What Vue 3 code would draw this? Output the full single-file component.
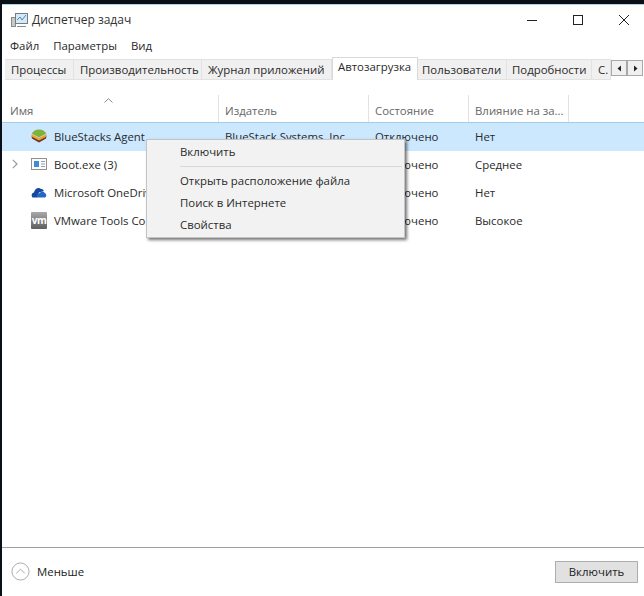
<script setup>
const tabs = [
  { label: 'Процессы', w: 69, pad: 6 },
  { label: 'Производительность', w: 128, pad: 6 },
  { label: 'Журнал приложений', w: 130, pad: 6 },
  { label: 'Автозагрузка', w: 86, pad: 5, active: true },
  { label: 'Пользователи', w: 89, pad: 4 },
  { label: 'Подробности', w: 85, pad: 5 },
  { label: 'С.', w: 19, pad: 6 }
]
const rows = [
  { name: 'BlueStacks Agent', icon: 'bs', pub: 'BlueStack Systems, Inc.', state: 'Отключено', impact: 'Нет', selected: true },
  { name: 'Boot.exe (3)', icon: 'boot', pub: '', state: 'Отключено', impact: 'Среднее', expand: true },
  { name: 'Microsoft OneDrive', icon: 'od', pub: '', state: 'Отключено', impact: 'Нет' },
  { name: 'VMware Tools Core Service', icon: 'vm', pub: '', state: 'Отключено', impact: 'Высокое' }
]
</script>

<template>
  <div class="screen">
    <div class="win">
      <div class="titlebar">
        <svg class="appicon" width="18" height="16" viewBox="0 0 18 16">
          <rect x="0.5" y="5.5" width="4" height="9" fill="#c9c9c9" stroke="#8a8a8a" />
          <rect x="4.5" y="1.5" width="12" height="10" fill="#d8e8f2" stroke="#6f7f8a" />
          <path d="M6 8 L9 5 L11 8 L15 3" fill="none" stroke="#3f8fc0" stroke-width="1" />
          <path d="M6 14.5 H15" stroke="#8a8a8a" />
        </svg>
        <span class="title">Диспетчер задач</span>
        <div class="winbtns">
          <svg width="12" height="12" viewBox="0 0 12 12"><path d="M1 6.5 H11" stroke="#222" /></svg>
          <svg width="12" height="12" viewBox="0 0 12 12"><rect x="1.5" y="1.5" width="9" height="9" fill="none" stroke="#222" /></svg>
          <svg width="12" height="12" viewBox="0 0 12 12"><path d="M1 1 L11 11 M11 1 L1 11" stroke="#222" /></svg>
        </div>
      </div>

      <div class="menubar">
        <span>Файл</span><span>Параметры</span><span>Вид</span>
      </div>

      <div class="tabstrip">
        <div
          v-for="t in tabs"
          :key="t.label"
          class="tab"
          :class="{ active: t.active }"
          :style="{ width: t.w + 'px', paddingLeft: t.pad + 'px' }"
        >{{ t.label }}</div>
        <div class="scroller">
          <div class="sbtn"><svg width="5" height="7" viewBox="0 0 5 7"><path d="M4 0.5 V6.5 L0.5 3.5 Z" fill="#222" /></svg></div>
          <div class="sbtn"><svg width="5" height="7" viewBox="0 0 5 7"><path d="M1 0.5 V6.5 L4.5 3.5 Z" fill="#222" /></svg></div>
        </div>
      </div>

      <div class="content">
        <div class="thead">
          <div class="th c1">
            <svg class="sort" width="9" height="5" viewBox="0 0 9 5"><path d="M0.5 4.5 L4.5 0.7 L8.5 4.5" fill="none" stroke="#8a8a8a" /></svg>
            Имя
          </div>
          <div class="th c2">Издатель</div>
          <div class="th c3">Состояние</div>
          <div class="th c4">Влияние на за...</div>
        </div>

        <div v-for="r in rows" :key="r.name" class="row" :class="{ selected: r.selected }">
          <div class="c1 namecell">
            <span class="exp">
              <svg v-if="r.expand" width="6" height="10" viewBox="0 0 6 10"><path d="M0.8 0.8 L5 5 L0.8 9.2" fill="none" stroke="#9a9a9a" stroke-width="1.2" /></svg>
            </span>
            <svg v-if="r.icon === 'bs'" class="ic" width="16" height="16" viewBox="0 0 16 16">
              <path d="M0.5 8 L8 12 L15.5 8 L15 10.5 L8 14.5 L1 10.5 Z" fill="#7a2c26" />
              <path d="M0.5 6 L8 10 L15.5 6 L15.5 8.5 L8 12.5 L0.5 8.5 Z" fill="#e3a52e" />
              <path d="M0.8 5.5 C2 3.5 4 1.5 8 1.5 C12 1.5 14 3.5 15.2 5.5 L8 9.5 Z" fill="#7fb23a" />
            </svg>
            <svg v-else-if="r.icon === 'boot'" class="ic" width="16" height="16" viewBox="0 0 16 16">
              <rect x="0.5" y="2.5" width="15" height="11" fill="#fbfbfb" stroke="#9a8f88" />
              <rect x="3" y="5" width="5" height="6" fill="#3f8ad6" />
              <path d="M10 5.5 H14 M10 8 H14 M10 10.5 H14" stroke="#8fa3b5" />
            </svg>
            <svg v-else-if="r.icon === 'od'" class="ic" width="16" height="16" viewBox="0 0 16 16">
              <path d="M1.5 13.5 C0 12 0.5 9 3 8.6 C3.5 5 7.5 2.5 10 5 C11 4.6 12.5 5.4 12.8 7 L8 8.5 L6 13.5 Z" fill="#15489f" />
              <path d="M6 13.5 C5.6 11 7 9.2 9 9 C10 7 13 7 13.6 9 C15.4 9.2 16 12.5 14 13.5 Z" fill="#2566c4" />
            </svg>
            <span v-else class="ic vm">vm</span>
            <span class="nm">{{ r.name }}</span>
          </div>
          <div class="c2 cell">{{ r.pub }}</div>
          <div class="c3 cell">{{ r.state }}</div>
          <div class="c4 cell">{{ r.impact }}</div>
        </div>

        <div class="ctx">
          <div class="mi">Включить</div>
          <div class="sep"></div>
          <div class="mi">Открыть расположение файла</div>
          <div class="mi">Поиск в Интернете</div>
          <div class="mi">Свойства</div>
        </div>
      </div>

      <div class="footer">
        <div class="less">
          <svg width="19" height="19" viewBox="0 0 20 20">
            <circle cx="10" cy="10" r="9" fill="#fff" stroke="#a8a8a8" />
            <path d="M5.5 12 L10 7.5 L14.5 12" fill="none" stroke="#a8a8a8" />
          </svg>
          <span>Меньше</span>
        </div>
        <div class="btn">Включить</div>
      </div>
    </div>
  </div>
</template>

<style>
html, body { margin: 0; padding: 0; background: #fff; }
</style>

<style scoped>
.screen {
  width: 644px;
  height: 596px;
  overflow: hidden;
  background: #0a1018;
  padding: 4px 0 0 2px;
  box-sizing: border-box;
  font-family: "Open Sans", "Noto Sans", sans-serif;
  font-size: 11.4px;
  color: #2a2a2a;
}
.win {
  width: 642px;
  height: 592px;
  background: #fff;
  display: flex;
  flex-direction: column;
  border-top: 1px solid #a9d3ee;
  box-sizing: border-box;
}
.titlebar {
  height: 29px;
  display: flex;
  align-items: center;
  padding-left: 9px;
  flex: none;
}
.appicon { margin-right: 3px; }
.title { font-size: 12px; color: #333; }
.winbtns {
  margin-left: auto;
  display: flex;
  gap: 34px;
  padding-right: 14px;
}
.menubar {
  height: 23px;
  display: flex;
  align-items: center;
  gap: 14px;
  padding-left: 8px;
  flex: none;
}
.tabstrip {
  height: 23px;
  flex: none;
  display: flex;
  align-items: flex-end;
  position: relative;
  padding-left: 3px;
}
.tab {
  height: 21px;
  line-height: 20px;
  box-sizing: border-box;
  background: #f0f0f0;
  border: 1px solid #e2e2e2;
  border-left: 0;
  white-space: nowrap;
  overflow: hidden;
  flex: none;
}
.tab.active {
  height: 23px;
  line-height: 17px;
  background: #fff;
  border: 1px solid #d9d9d9;
  border-bottom: 0;
}
.scroller {
  position: absolute;
  left: 609px;
  top: 3px;
  display: flex;
}
.sbtn {
  width: 16px;
  height: 16px;
  box-sizing: border-box;
  background: #f0f0f0;
  border: 1px solid #a8a8a8;
  display: flex;
  align-items: center;
  justify-content: center;
}
.content {
  flex: 1;
  position: relative;
  min-height: 0;
}
.thead {
  display: flex;
  height: 43px;
  box-sizing: border-box;
  border-bottom: 1px solid #a5cde8;
  padding-top: 15px;
}
.th {
  box-sizing: border-box;
  border-right: 1px solid #e2e2e2;
  color: #666;
  padding: 8px 0 0 6px;
  position: relative;
  white-space: nowrap;
}
.th.c1 { padding-left: 8px; }
.sort {
  position: absolute;
  left: 102px;
  top: 3px;
}
.c1 { width: 217px; flex: none; }
.c2 { width: 150px; flex: none; }
.c3 { width: 100px; flex: none; }
.c4 { width: 100px; flex: none; }
.row {
  display: flex;
  height: 28px;
  align-items: center;
  box-sizing: border-box;
  padding-bottom: 2px;
}
.row.selected { background: #cce8ff; }
.namecell {
  display: flex;
  align-items: center;
}
.exp {
  width: 29px;
  flex: none;
  padding-left: 10px;
  box-sizing: border-box;
  display: flex;
  align-items: center;
}
.ic { flex: none; margin-right: 7px; }
.vm {
  width: 16px;
  height: 17px;
  border-radius: 1px;
  background: linear-gradient(#a8a8a8, #5e5e5e);
  color: #fff;
  font-size: 10px;
  line-height: 17px;
  text-align: center;
  font-weight: 700;
  letter-spacing: -0.5px;
}
.nm { white-space: nowrap; }
.cell { padding-left: 6px; box-sizing: border-box; white-space: nowrap; }
.ctx {
  position: absolute;
  left: 144px;
  top: 59px;
  width: 259px;
  height: 99px;
  box-sizing: border-box;
  background: #f2f2f2;
  border: 1px solid #c4c4c4;
  box-shadow: 2px 2px 3px rgba(0, 0, 0, 0.55);
  padding-top: 1px;
}
.mi {
  height: 22px;
  line-height: 22px;
  padding-left: 33px;
  white-space: nowrap;
}
.sep {
  height: 1px;
  background: #d8d8d8;
  margin: 3px 2px 3px 33px;
}
.footer {
  flex: none;
  height: 49px;
  box-sizing: border-box;
  border-top: 1px solid #a0a0a0;
  display: flex;
  align-items: center;
  justify-content: space-between;
  padding: 0 6px 0 9px;
}
.less {
  display: flex;
  align-items: center;
  gap: 7px;
  color: #222;
  padding-bottom: 2px;
}
.btn {
  width: 83px;
  height: 22px;
  box-sizing: border-box;
  line-height: 20px;
  text-align: center;
  background: #e1e1e1;
  border: 1px solid #adadad;
  color: #222;
}
</style>
